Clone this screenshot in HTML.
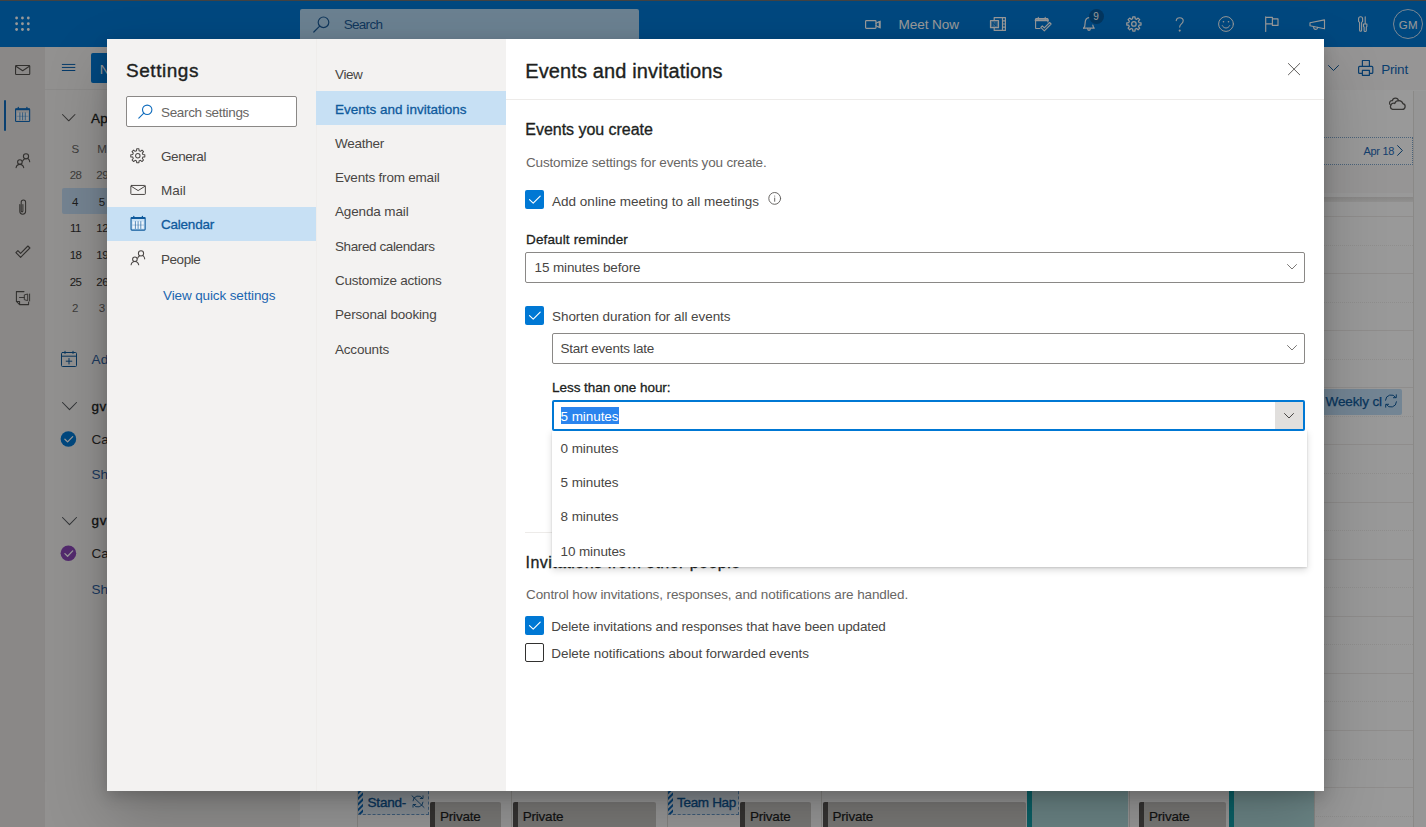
<!DOCTYPE html>
<html lang="en"><head><meta charset="utf-8"><title>Settings - Calendar - Events and invitations</title>
<style>
*{box-sizing:border-box}
html,body{margin:0;padding:0}
body{width:1426px;height:827px;overflow:hidden;position:relative;background:#fff;font-family:"Liberation Sans",sans-serif}
.t{position:absolute;white-space:nowrap;line-height:1;display:block}
.a{position:absolute}
svg{position:absolute;overflow:visible}
#bg{position:absolute;left:0;top:0;width:1426px;height:827px;overflow:hidden;background:#fff}
#ov{position:absolute;left:0;top:0;width:1426px;height:827px;background:rgba(0,0,0,.4)}
#modal{position:absolute;left:107px;top:39px;width:1217px;height:752px;background:#fff;box-shadow:0 25.600px 57.600px 0 rgba(0,0,0,.22),0 4.800px 14.400px 0 rgba(0,0,0,.18)}
.cb{position:absolute;width:19.300px;height:19.300px;border-radius:2px;background:#0078d4}
.dd{position:absolute;height:31px;border:1px solid #8a8886;border-radius:2px;background:#fff}
.hl{stroke:#edebe9;stroke-width:1}
</style></head><body>
<div id="bg">
<div class="a" style="left:0;top:0;width:1426px;height:47px;background:#0078d4"></div>
<div class="a" style="left:0;top:0;width:1426px;height:1.200px;background:#716f6d"></div>
<div class="a" style="left:300px;top:9px;width:339px;height:32px;border-radius:2px;background:rgba(255,255,255,.7)"></div>
<svg style="left:0;top:0" width="46" height="46" fill="#fff"><circle cx="16.60" cy="18.00" r="1.400"/><circle cx="16.60" cy="23.75" r="1.400"/><circle cx="16.60" cy="29.50" r="1.400"/><circle cx="22.45" cy="18.00" r="1.400"/><circle cx="22.45" cy="23.75" r="1.400"/><circle cx="22.45" cy="29.50" r="1.400"/><circle cx="28.30" cy="18.00" r="1.400"/><circle cx="28.30" cy="23.75" r="1.400"/><circle cx="28.30" cy="29.50" r="1.400"/></svg>
<svg style="left:312.5px;top:15.5px" width="17" height="17" viewBox="0 0 17 17" fill="none" stroke="#1d5d9a" stroke-width="1.2" stroke-linecap="round" stroke-linejoin="round"><circle cx="10.500" cy="6.300" r="5.300"/><path d="M6.700 10.100L.800 16"/></svg>
<svg style="left:865px;top:19.5px" width="16" height="9" viewBox="0 0 16 9" fill="none" stroke="#fff" stroke-width="1.2" stroke-linecap="round" stroke-linejoin="round"><rect x=".6" y=".6" width="10.400" height="7.800" rx=".8"/><path d="M11 3.300l3.300-1.800v6l-3.300-1.800M15.200 1v7" stroke-width="1.100"/></svg>
<svg style="left:989.5px;top:17px" width="16" height="14" viewBox="0 0 16 14" fill="none" stroke="#fff" stroke-width="1.2" stroke-linecap="round" stroke-linejoin="round"><path d="M4.200 3.300V.6h11.200v12.800H4.200v-2.500"/><rect x=".5" y="3.500" width="8" height="7.200" fill="#fff" fill-opacity=".4"/><path d="M2.800 9V5.200l3.200 3.800V5.200" stroke="#0078d4" stroke-width="1"/><path d="M12.500.6v12.800M12.500 3.800h2.900M12.500 7h2.900M12.500 10.200h2.900"/></svg>
<svg style="left:1034.5px;top:16.5px" width="17" height="15" viewBox="0 0 17 15" fill="none" stroke="#fff" stroke-width="1.1" stroke-linecap="round" stroke-linejoin="round"><path d="M5 11.500H1.200a.6.6 0 01-.6-.6V2.200a.6.6 0 01.6-.6h11.100a.6.6 0 01.6.6V5"/><path d="M.6 3.200h12.300" stroke-width="2"/><path d="M3.300.4v1.800M10.200.4v1.800"/><path d="M5.800 10.300l1.500-1.500 2 2 5.300-5.300 1.500 1.500-6.800 6.800z" stroke-width="1.100"/></svg>
<svg style="left:1083px;top:17px" width="12" height="14" viewBox="0 0 12 14" fill="none" stroke="#fff" stroke-width="1.2" stroke-linecap="round" stroke-linejoin="round"><path d="M.6 11.200c1.200-1.100 1.500-2.400 1.500-5C2.100 3 3.600.6 6.200.6"/><path d="M.6 11.200h10.600c-.8-.8-1.300-1.800-1.400-3.200"/><path d="M4.600 11.600c.1 1 .7 1.700 1.400 1.700s1.300-.7 1.400-1.700"/></svg>
<div class="a" style="left:1088.500px;top:8.800px;width:15px;height:15px;border-radius:50%;background:#065a9e"></div>
<svg style="left:1126.4px;top:16.1px" width="15.8" height="15.8" viewBox="0 0 16 16" fill="none" stroke="#fff" stroke-width="1.25" stroke-linecap="round" stroke-linejoin="round"><path d="M13.24 6.70L15.21 6.86L15.21 9.14L13.24 9.30L12.63 10.79L13.91 12.29L12.29 13.91L10.79 12.63L9.30 13.24L9.14 15.21L6.86 15.21L6.70 13.24L5.21 12.63L3.71 13.91L2.09 12.29L3.37 10.79L2.76 9.30L0.79 9.14L0.79 6.86L2.76 6.70L3.37 5.21L2.09 3.71L3.71 2.09L5.21 3.37L6.70 2.76L6.86 0.79L9.14 0.79L9.30 2.76L10.79 3.37L12.29 2.09L13.91 3.71L12.63 5.21Z"/><circle cx="8" cy="8" r="2.3"/></svg>
<svg style="left:1175px;top:16.5px" width="10" height="15" viewBox="0 0 10 15" fill="none" stroke="#fff" stroke-width="1.1" stroke-linecap="round" stroke-linejoin="round"><path d="M1.200 3.600C1.400 1.800 2.800.700 4.700.700c2 0 3.500 1.200 3.500 3.100 0 1.600-.9 2.400-2 3.300-1 .8-1.500 1.500-1.500 3.000"/><circle cx="4.700" cy="13.600" r=".5" fill="#fff"/></svg>
<svg style="left:1217.7px;top:16px" width="16" height="16" viewBox="0 0 16 16" fill="none" stroke="#fff" stroke-width="1" stroke-linecap="round" stroke-linejoin="round"><circle cx="8" cy="8" r="7.4"/><path d="M4.300 9.600c.8 1.600 2.100 2.400 3.700 2.400s2.900-.8 3.700-2.400"/><circle cx="5.500" cy="5.800" r=".8" fill="#fff" stroke="none"/><circle cx="10.500" cy="5.800" r=".8" fill="#fff" stroke="none"/></svg>
<svg style="left:0;top:0" width="1426" height="827" viewBox="0 0 1426 827" fill="none" stroke="#fff" stroke-width="1.15" stroke-linecap="round" stroke-linejoin="round"><path d="M1265.700 16.800V31.500M1265.700 17.300H1272.400V23.900H1265.700M1272.400 18.900H1278V25.400H1272.400V23.900"/></svg>
<svg style="left:0;top:0" width="1426" height="827" viewBox="0 0 1426 827" fill="none" stroke="#fff" stroke-width="1.15" stroke-linecap="round" stroke-linejoin="round"><path d="M1324.500 19.900V28.700L1310 25.700V22.700Z"/><path d="M1313.700 26.600v1.300c.2 1 1 1.500 1.900 1.500s1.700-.5 1.900-1.400v-.6"/></svg>
<svg style="left:0;top:0" width="1426" height="827" viewBox="0 0 1426 827" fill="none" stroke="#fff" stroke-width="1.1" stroke-linecap="round" stroke-linejoin="round"><path d="M1358.600 18.800a2 2 0 014 0v2.600l-1 1.100v7.800a1 1 0 01-2 0v-7.800l-1-1.100z"/><path d="M1365.200 16.800v7.200M1363.500 24h3.400v2.300l-.6.800v3.300a1.100 1.100 0 01-2.200 0v-3.300l-.6-.8z"/></svg>
<div class="a" style="left:1393px;top:9px;width:30px;height:30px;border-radius:50%;border:1px solid #cfe3f5"></div>
<div class="a" style="left:0;top:47px;width:45px;height:780px;background:#e6e3e1"></div>
<div class="a" style="left:45px;top:47px;width:255px;height:780px;background:#f3f2f1"></div>
<div class="a" style="left:45px;top:89px;width:255px;height:1px;background:#e8e6e4"></div>
<div class="a" style="left:4px;top:100px;width:2px;height:31px;background:#0f6cbd;border-radius:1px"></div>
<svg style="left:0;top:0" width="1426" height="827" viewBox="0 0 1426 827" fill="none" stroke="#53504d" stroke-width="1.1" stroke-linecap="round" stroke-linejoin="round"><rect x="15.550" y="65.550" width="14.200" height="9" rx=".7"/><path d="M15.900 66.300L22.650 70.700L29.400 66.300"/></svg>
<svg style="left:0;top:0" width="1426" height="827" viewBox="0 0 1426 827" fill="none" stroke="#0f6cbd" stroke-width="1" stroke-linecap="round" stroke-linejoin="round"><rect x="15.55" y="108.75" width="14.10" height="12.70" rx=".8" stroke-width="1.100"/><rect x="15.50" y="108.50" width="14.20" height="1.700" fill="#0f6cbd" stroke="none"/><path d="M18.30 107.50v1.200M26.90 107.50v1.200" stroke-width="1.300"/><rect x="17.20" y="112.80" width="10.80" height="7.00" fill="#f3f8fd" stroke="none"/><path d="M19.90 112.80v7.00" stroke-width=".9" stroke-opacity=".75"/><path d="M22.60 112.80v7.00" stroke-width=".9" stroke-opacity=".75"/><path d="M25.30 112.80v7.00" stroke-width=".9" stroke-opacity=".75"/><path d="M17.20 116.30h10.80" stroke-width=".6" stroke-opacity=".5"/></svg>
<svg style="left:0;top:0" width="1426" height="827" viewBox="0 0 1426 827" fill="none" stroke="#53504d" stroke-width="1.1" stroke-linecap="round" stroke-linejoin="round"><circle cx="26" cy="156.3" r="2.600"/><circle cx="19.9" cy="162.1" r="2.300"/><path d="M28.2 158.8c1 .8 1.400 1.800 1.500 3M22.6 161.2c.4-1.200 1.100-2 2-2.500M16.1 167.7c.4-2.100 1.900-3.300 3.800-3.300s3.300 1.200 3.800 3.300"/></svg>
<svg style="left:0;top:0" width="1426" height="827" viewBox="0 0 1426 827" fill="none" stroke="#53504d" stroke-width="1.05" stroke-linecap="round" stroke-linejoin="round"><path d="M19.800 204.500v6.800a2.900 2.900 0 005.800 0v-9.200a2.200 2.200 0 00-4.400 0v8.900a.85.85 0 001.700 0v-6.500"/></svg>
<svg style="left:0;top:0" width="1426" height="827" viewBox="0 0 1426 827" fill="none" stroke="#53504d" stroke-width="1.1" stroke-linecap="round" stroke-linejoin="round"><path d="M15.900 252.600l2-2 2.700 2.700 7.300-7.300 2 2-9.300 9.300z"/></svg>
<svg style="left:0;top:0" width="1426" height="827" viewBox="0 0 1426 827" fill="none" stroke="#53504d" stroke-width="1.05" stroke-linecap="round" stroke-linejoin="round"><path d="M24 291.600H16.400v9.800l3.200 3.200H28.600v-2.500M16.400 301.400h3.200v3.200"/><path d="M19.500 297.500h4.700M24.300 295.300v4.400l3.400.9v-6.200zM29.600 294v7" stroke-width=".95"/></svg>
<svg style="left:0;top:0" width="1426" height="827" viewBox="0 0 1426 827" fill="none" stroke="#0b62b0" stroke-width="1" stroke-linecap="round" stroke-linejoin="round"><path d="M62.300 64.450h12.600M62.300 67.450h12.600M62.300 70.500h12.600"/></svg>
<div class="a" style="left:91.300px;top:52.700px;width:120px;height:30.300px;background:#0078d4;border-radius:2px"></div>
<svg style="left:61.95px;top:113.55px" width="13.5" height="7.3" viewBox="0 0 13.5 7.3" fill="none" stroke="#5a5856" stroke-width="1.05" stroke-linecap="round" stroke-linejoin="round"><path d="M0.5 0.5L6.75 6.8L13.0 0.5"/></svg>
<div class="a" style="left:62px;top:187.700px;width:180px;height:26.500px;background:#c3dcf3;border-radius:2px"></div>
<svg style="left:60.5px;top:351px" width="16" height="16" viewBox="0 0 16 16" fill="none" stroke="#0f5a9c" stroke-width="1" stroke-linecap="round" stroke-linejoin="round"><rect x=".5" y="1.500" width="15" height="14" rx="1"/><path d="M.5 5.200h15M4 .3v2.200M12 .3v2.200M8 7.500v5.500M5.200 10.200h5.600"/></svg>
<svg style="left:61.900000000000006px;top:402.2px" width="15" height="8.2" viewBox="0 0 15 8.2" fill="none" stroke="#55585c" stroke-width="1.05" stroke-linecap="round" stroke-linejoin="round"><path d="M0.5 0.5L7.5 7.699999999999999L14.5 0.5"/></svg>
<svg style="left:61.900000000000006px;top:516.6px" width="15" height="8.2" viewBox="0 0 15 8.2" fill="none" stroke="#55585c" stroke-width="1.05" stroke-linecap="round" stroke-linejoin="round"><path d="M0.5 0.5L7.5 7.699999999999999L14.5 0.5"/></svg>
<svg style="left:0;top:0" width="1426" height="827" viewBox="0 0 1426 827" fill="none" stroke="#fff" stroke-width="1" stroke-linecap="round" stroke-linejoin="round"><circle cx="68.400" cy="439" r="7.800" fill="#0078d4" stroke="none"/><path d="M64.900 439.3l2.700 2.600 5.100-5.300" stroke-width="1.300"/></svg>
<svg style="left:0;top:0" width="1426" height="827" viewBox="0 0 1426 827" fill="none" stroke="#fff" stroke-width="1" stroke-linecap="round" stroke-linejoin="round"><circle cx="68.400" cy="553.3" r="7.800" fill="#8a46b8" stroke="none"/><path d="M64.900 553.6l2.700 2.600 5.100-5.300" stroke-width="1.300"/></svg>
<div class="a" style="left:300px;top:47px;width:1126px;height:43px;background:#faf9f8"></div>
<div class="a" style="left:300px;top:90.500px;width:1113px;height:737px;background:#fff"></div>
<div class="a" style="left:1413px;top:90.500px;width:13px;height:737px;background:#fbfbfb;border-left:1px solid #e6e4e2"></div>
<svg style="left:1327.5px;top:65.0px" width="11" height="6" viewBox="0 0 11 6" fill="none" stroke="#0f5a9c" stroke-width="1" stroke-linecap="round" stroke-linejoin="round"><path d="M0.5 0.5L5.5 5.5L10.5 0.5"/></svg>
<svg style="left:0;top:0" width="1426" height="827" viewBox="0 0 1426 827" fill="none" stroke="#1068b8" stroke-width="1.2" stroke-linecap="round" stroke-linejoin="round"><path d="M1362.400 66.200V60.500h7v5.700"/><rect x="1358.600" y="66.400" width="14.200" height="7" rx="1"/><rect x="1362.400" y="70.300" width="7" height="5" fill="#faf9f8"/></svg>
<svg style="left:0;top:0" width="1426" height="827" viewBox="0 0 1426 827" fill="none" stroke="#5c5a58" stroke-width="1.25" stroke-linecap="round" stroke-linejoin="round"><path d="M1392.600 109.400H1402.300A2.900 2.900 0 001403 103.700A4.400 4.400 0 001394.700 103.500A3 3 0 001392.600 109.400Z"/><path d="M1390.700 105.300A2.500 2.500 0 011392.400 100.700A3.100 3.100 0 011398.500 100.600"/></svg>
<div class="a" style="left:1314px;top:136.500px;width:99px;height:28.300px;border:1px dotted #7ea6cc"></div>
<svg style="left:1396.500px;top:145px" width="6" height="11" fill="none" stroke="#0f5a9c" stroke-width="1" stroke-linecap="round" stroke-linejoin="round"><path d="M.6.600L5.400 5.500.6 10.400"/></svg>
<div class="a" style="left:1314px;top:165px;width:99px;height:28px;background:#faf9f8"></div>
<div class="a" style="left:1314px;top:196.500px;width:99px;height:5px;background:linear-gradient(#e3e1df,#f1f0ef)"></div>
<div class="a" style="left:1314px;top:216.1px;width:99px;height:0;border-top:1px solid #eeecea"></div>
<div class="a" style="left:1314px;top:244.6px;width:99px;height:0;border-top:1px dotted #efedeb"></div>
<div class="a" style="left:1314px;top:273.1px;width:99px;height:0;border-top:1px solid #eeecea"></div>
<div class="a" style="left:1314px;top:301.7px;width:99px;height:0;border-top:1px dotted #efedeb"></div>
<div class="a" style="left:1314px;top:330.2px;width:99px;height:0;border-top:1px solid #eeecea"></div>
<div class="a" style="left:1314px;top:358.8px;width:99px;height:0;border-top:1px dotted #efedeb"></div>
<div class="a" style="left:1314px;top:387.4px;width:99px;height:0;border-top:1px solid #eeecea"></div>
<div class="a" style="left:1314px;top:415.9px;width:99px;height:0;border-top:1px dotted #efedeb"></div>
<div class="a" style="left:1314px;top:444.4px;width:99px;height:0;border-top:1px solid #eeecea"></div>
<div class="a" style="left:1314px;top:473.0px;width:99px;height:0;border-top:1px dotted #efedeb"></div>
<div class="a" style="left:1314px;top:501.6px;width:99px;height:0;border-top:1px solid #eeecea"></div>
<div class="a" style="left:1314px;top:530.1px;width:99px;height:0;border-top:1px dotted #efedeb"></div>
<div class="a" style="left:1314px;top:558.7px;width:99px;height:0;border-top:1px solid #eeecea"></div>
<div class="a" style="left:1314px;top:587.2px;width:99px;height:0;border-top:1px dotted #efedeb"></div>
<div class="a" style="left:1314px;top:615.8px;width:99px;height:0;border-top:1px solid #eeecea"></div>
<div class="a" style="left:1314px;top:644.3px;width:99px;height:0;border-top:1px dotted #efedeb"></div>
<div class="a" style="left:1314px;top:672.9px;width:99px;height:0;border-top:1px solid #eeecea"></div>
<div class="a" style="left:1314px;top:701.4px;width:99px;height:0;border-top:1px dotted #efedeb"></div>
<div class="a" style="left:1314px;top:730.0px;width:99px;height:0;border-top:1px solid #eeecea"></div>
<div class="a" style="left:1314px;top:758.5px;width:99px;height:0;border-top:1px dotted #efedeb"></div>
<div class="a" style="left:1314px;top:787.1px;width:99px;height:0;border-top:1px solid #eeecea"></div>
<div class="a" style="left:1314px;top:815.6px;width:99px;height:0;border-top:1px dotted #efedeb"></div>
<div class="a" style="left:1314px;top:844.1px;width:99px;height:0;border-top:1px solid #eeecea"></div>
<div class="a" style="left:1318px;top:388.800px;width:84.200px;height:25.800px;background:#c0def7;border-radius:2px"></div>
<svg style="left:1384px;top:394px" width="14" height="14" viewBox="0 0 14 14" fill="none" stroke="#0f5a9c" stroke-width="1" stroke-linecap="round" stroke-linejoin="round"><path d="M1.500 6.200A5.600 5.600 0 0111.800 3.500M12.500 7.800A5.600 5.600 0 012.200 10.500"/><path d="M12.300.800v2.900H9.400M1.700 13.200v-2.900h2.900"/></svg>
<svg style="left:0;top:0" width="1" height="1"><defs><pattern id="ht" width="4" height="4" patternUnits="userSpaceOnUse" patternTransform="rotate(-45)"><rect width="4" height="2" fill="#0f6cbd"/></pattern></defs></svg>
<div class="a" style="left:358px;top:786px;width:70.5px;height:28.500px;background:#e6f0fa;border:1px dashed #6a9bcb;border-left:none"></div>
<svg style="left:358px;top:786px" width="5" height="28"><rect width="5" height="28" fill="url(#ht)"/></svg>
<div class="a" style="left:667.5px;top:786px;width:71.3px;height:28.500px;background:#e6f0fa;border:1px dashed #6a9bcb;border-left:none"></div>
<svg style="left:667.5px;top:786px" width="5" height="28"><rect width="5" height="28" fill="url(#ht)"/></svg>
<svg style="left:410.5px;top:794.5px" width="14" height="13" viewBox="0 0 14 13" fill="none" stroke="#0f5a9c" stroke-width="0.9" stroke-linecap="round" stroke-linejoin="round"><path d="M2 5.800A5.200 5.200 0 0111.500 3.300M12 7.200A5.200 5.200 0 012.500 9.700"/><path d="M12 .800v2.700H9.300M2 12.200V9.500h2.700"/><path d="M1 .800l12 11.600"/></svg>
<div class="a" style="left:430.3px;top:802px;width:70.7px;height:30px;background:#cecbc8;border-radius:2px"></div>
<div class="a" style="left:430.3px;top:802px;width:5px;height:30px;background:#5a5856;border-radius:2px 0 0 2px"></div>
<div class="a" style="left:513px;top:802px;width:142.5px;height:30px;background:#cecbc8;border-radius:2px"></div>
<div class="a" style="left:513px;top:802px;width:5px;height:30px;background:#5a5856;border-radius:2px 0 0 2px"></div>
<div class="a" style="left:740.3px;top:802px;width:70.7px;height:30px;background:#cecbc8;border-radius:2px"></div>
<div class="a" style="left:740.3px;top:802px;width:5px;height:30px;background:#5a5856;border-radius:2px 0 0 2px"></div>
<div class="a" style="left:822.9px;top:802px;width:203.3px;height:30px;background:#cecbc8;border-radius:2px"></div>
<div class="a" style="left:822.9px;top:802px;width:5px;height:30px;background:#5a5856;border-radius:2px 0 0 2px"></div>
<div class="a" style="left:1139.3px;top:802px;width:86.7px;height:30px;background:#cecbc8;border-radius:2px"></div>
<div class="a" style="left:1139.3px;top:802px;width:5px;height:30px;background:#5a5856;border-radius:2px 0 0 2px"></div>
<div class="a" style="left:1027px;top:760px;width:100.5px;height:70px;background:#b5dfe2"></div>
<div class="a" style="left:1027px;top:760px;width:5px;height:70px;background:#13a3ad"></div>
<div class="a" style="left:1228.5px;top:760px;width:85px;height:70px;background:#b5dfe2"></div>
<div class="a" style="left:1228.5px;top:760px;width:5px;height:70px;background:#13a3ad"></div>
<div class="a" style="left:357px;top:760px;width:1px;height:70px;background:#e1dfdd"></div>
<div class="a" style="left:511px;top:760px;width:1px;height:70px;background:#e1dfdd"></div>
<div class="a" style="left:667.3px;top:760px;width:1px;height:70px;background:#e1dfdd"></div>
<div class="a" style="left:821px;top:760px;width:1px;height:70px;background:#e1dfdd"></div>
<div class="a" style="left:1129px;top:760px;width:1px;height:70px;background:#e1dfdd"></div>
<div class="a" style="left:1314px;top:760px;width:1px;height:70px;background:#e1dfdd"></div>
<span class="t" style="font-size:13.5px;color:#1d5d9a;left:343.70px;top:18.00px;letter-spacing:-0.697px;">Search</span>
<span class="t" style="font-size:13.5px;color:#ffffff;left:898.60px;top:18.00px;letter-spacing:-0.048px;">Meet Now</span>
<span class="t" style="font-size:10px;color:#ffffff;left:1093.30px;top:12.00px;letter-spacing:0.037px;">9</span>
<span class="t" style="font-size:11.5px;color:#ffffff;left:1398.70px;top:20.00px;letter-spacing:0.384px;">GM</span>
<span class="t" style="font-size:13.5px;color:#1068b8;left:1381.20px;top:63.00px;letter-spacing:-0.193px;">Print</span>
<span class="t" style="font-size:11px;color:#1f6ab8;left:1363.60px;top:146.00px;letter-spacing:-0.337px;">Apr 18</span>
<span class="t" style="font-size:13.5px;color:#0f5a9c;-webkit-text-stroke:0.25px #0f5a9c;left:1325.60px;top:395.00px;letter-spacing:-0.124px;">Weekly cl</span>
<span class="t" style="font-size:13.5px;color:#ffffff;left:99.80px;top:63.00px;letter-spacing:0.245px;">New event</span>
<span class="t" style="font-size:13.5px;color:#201f1e;-webkit-text-stroke:0.3px #201f1e;left:91.00px;top:112.00px;letter-spacing:0.320px;">April 2021</span>
<span class="t" style="font-size:11.5px;color:#686664;left:45.30px;width:60px;text-align:center;top:144.00px;">S</span>
<span class="t" style="font-size:11.5px;color:#686664;left:72.00px;width:60px;text-align:center;top:144.00px;">M</span>
<span class="t" style="font-size:11.5px;color:#686664;left:98.70px;width:60px;text-align:center;top:144.00px;">T</span>
<span class="t" style="font-size:11.5px;color:#686664;left:125.40px;width:60px;text-align:center;top:144.00px;">W</span>
<span class="t" style="font-size:11.5px;color:#686664;left:152.10px;width:60px;text-align:center;top:144.00px;">T</span>
<span class="t" style="font-size:11.5px;color:#686664;left:178.80px;width:60px;text-align:center;top:144.00px;">F</span>
<span class="t" style="font-size:11.5px;color:#686664;left:205.50px;width:60px;text-align:center;top:144.00px;">S</span>
<span class="t" style="font-size:11.5px;color:#686664;left:45.30px;width:60px;text-align:center;top:170.00px;letter-spacing:-0.5px;text-indent:0.5px;">28</span>
<span class="t" style="font-size:11.5px;color:#686664;left:72.00px;width:60px;text-align:center;top:170.00px;letter-spacing:-0.5px;text-indent:0.5px;">29</span>
<span class="t" style="font-size:11.5px;color:#686664;left:98.70px;width:60px;text-align:center;top:170.00px;letter-spacing:-0.5px;text-indent:0.5px;">30</span>
<span class="t" style="font-size:11.5px;color:#686664;left:125.40px;width:60px;text-align:center;top:170.00px;letter-spacing:-0.5px;text-indent:0.5px;">31</span>
<span class="t" style="font-size:11.5px;color:#323130;left:152.10px;width:60px;text-align:center;top:170.00px;">1</span>
<span class="t" style="font-size:11.5px;color:#323130;left:178.80px;width:60px;text-align:center;top:170.00px;">2</span>
<span class="t" style="font-size:11.5px;color:#323130;left:205.50px;width:60px;text-align:center;top:170.00px;">3</span>
<span class="t" style="font-size:11.5px;color:#323130;left:45.30px;width:60px;text-align:center;top:197.00px;">4</span>
<span class="t" style="font-size:11.5px;color:#323130;left:72.00px;width:60px;text-align:center;top:197.00px;">5</span>
<span class="t" style="font-size:11.5px;color:#323130;left:98.70px;width:60px;text-align:center;top:197.00px;">6</span>
<span class="t" style="font-size:11.5px;color:#323130;left:125.40px;width:60px;text-align:center;top:197.00px;">7</span>
<span class="t" style="font-size:11.5px;color:#323130;left:152.10px;width:60px;text-align:center;top:197.00px;">8</span>
<span class="t" style="font-size:11.5px;color:#323130;left:178.80px;width:60px;text-align:center;top:197.00px;">9</span>
<span class="t" style="font-size:11.5px;color:#323130;left:205.50px;width:60px;text-align:center;top:197.00px;letter-spacing:-0.5px;text-indent:0.5px;">10</span>
<span class="t" style="font-size:11.5px;color:#323130;left:45.30px;width:60px;text-align:center;top:223.00px;letter-spacing:-0.5px;text-indent:0.5px;">11</span>
<span class="t" style="font-size:11.5px;color:#323130;left:72.00px;width:60px;text-align:center;top:223.00px;letter-spacing:-0.5px;text-indent:0.5px;">12</span>
<span class="t" style="font-size:11.5px;color:#323130;left:98.70px;width:60px;text-align:center;top:223.00px;letter-spacing:-0.5px;text-indent:0.5px;">13</span>
<span class="t" style="font-size:11.5px;color:#323130;left:125.40px;width:60px;text-align:center;top:223.00px;letter-spacing:-0.5px;text-indent:0.5px;">14</span>
<span class="t" style="font-size:11.5px;color:#323130;left:152.10px;width:60px;text-align:center;top:223.00px;letter-spacing:-0.5px;text-indent:0.5px;">15</span>
<span class="t" style="font-size:11.5px;color:#323130;left:178.80px;width:60px;text-align:center;top:223.00px;letter-spacing:-0.5px;text-indent:0.5px;">16</span>
<span class="t" style="font-size:11.5px;color:#323130;left:205.50px;width:60px;text-align:center;top:223.00px;letter-spacing:-0.5px;text-indent:0.5px;">17</span>
<span class="t" style="font-size:11.5px;color:#323130;left:45.30px;width:60px;text-align:center;top:250.00px;letter-spacing:-0.5px;text-indent:0.5px;">18</span>
<span class="t" style="font-size:11.5px;color:#323130;left:72.00px;width:60px;text-align:center;top:250.00px;letter-spacing:-0.5px;text-indent:0.5px;">19</span>
<span class="t" style="font-size:11.5px;color:#323130;left:98.70px;width:60px;text-align:center;top:250.00px;letter-spacing:-0.5px;text-indent:0.5px;">20</span>
<span class="t" style="font-size:11.5px;color:#323130;left:125.40px;width:60px;text-align:center;top:250.00px;letter-spacing:-0.5px;text-indent:0.5px;">21</span>
<span class="t" style="font-size:11.5px;color:#323130;left:152.10px;width:60px;text-align:center;top:250.00px;letter-spacing:-0.5px;text-indent:0.5px;">22</span>
<span class="t" style="font-size:11.5px;color:#323130;left:178.80px;width:60px;text-align:center;top:250.00px;letter-spacing:-0.5px;text-indent:0.5px;">23</span>
<span class="t" style="font-size:11.5px;color:#323130;left:205.50px;width:60px;text-align:center;top:250.00px;letter-spacing:-0.5px;text-indent:0.5px;">24</span>
<span class="t" style="font-size:11.5px;color:#323130;left:45.30px;width:60px;text-align:center;top:277.00px;letter-spacing:-0.5px;text-indent:0.5px;">25</span>
<span class="t" style="font-size:11.5px;color:#323130;left:72.00px;width:60px;text-align:center;top:277.00px;letter-spacing:-0.5px;text-indent:0.5px;">26</span>
<span class="t" style="font-size:11.5px;color:#323130;left:98.70px;width:60px;text-align:center;top:277.00px;letter-spacing:-0.5px;text-indent:0.5px;">27</span>
<span class="t" style="font-size:11.5px;color:#323130;left:125.40px;width:60px;text-align:center;top:277.00px;letter-spacing:-0.5px;text-indent:0.5px;">28</span>
<span class="t" style="font-size:11.5px;color:#323130;left:152.10px;width:60px;text-align:center;top:277.00px;letter-spacing:-0.5px;text-indent:0.5px;">29</span>
<span class="t" style="font-size:11.5px;color:#323130;left:178.80px;width:60px;text-align:center;top:277.00px;letter-spacing:-0.5px;text-indent:0.5px;">30</span>
<span class="t" style="font-size:11.5px;color:#686664;left:205.50px;width:60px;text-align:center;top:277.00px;">1</span>
<span class="t" style="font-size:11.5px;color:#686664;left:45.30px;width:60px;text-align:center;top:303.00px;">2</span>
<span class="t" style="font-size:11.5px;color:#686664;left:72.00px;width:60px;text-align:center;top:303.00px;">3</span>
<span class="t" style="font-size:11.5px;color:#686664;left:98.70px;width:60px;text-align:center;top:303.00px;">4</span>
<span class="t" style="font-size:11.5px;color:#686664;left:125.40px;width:60px;text-align:center;top:303.00px;">5</span>
<span class="t" style="font-size:11.5px;color:#686664;left:152.10px;width:60px;text-align:center;top:303.00px;">6</span>
<span class="t" style="font-size:11.5px;color:#686664;left:178.80px;width:60px;text-align:center;top:303.00px;">7</span>
<span class="t" style="font-size:11.5px;color:#686664;left:205.50px;width:60px;text-align:center;top:303.00px;">8</span>
<span class="t" style="font-size:13.5px;color:#2f5f9e;left:91.60px;top:353.00px;letter-spacing:0.036px;">Add calendar</span>
<span class="t" style="font-size:13.5px;color:#201f1e;-webkit-text-stroke:0.3px #201f1e;left:91.60px;top:400.00px;letter-spacing:0.457px;">gvance@contoso.com</span>
<span class="t" style="font-size:13.5px;color:#323130;left:91.60px;top:433.00px;letter-spacing:-0.100px;">Calendar</span>
<span class="t" style="font-size:13.5px;color:#2f5f9e;left:91.60px;top:468.00px;letter-spacing:-0.129px;">Show all</span>
<span class="t" style="font-size:13.5px;color:#201f1e;-webkit-text-stroke:0.3px #201f1e;left:91.60px;top:514.00px;letter-spacing:0.665px;">gvance@outlook.com</span>
<span class="t" style="font-size:13.5px;color:#323130;left:91.60px;top:547.00px;letter-spacing:-0.100px;">Calendar</span>
<span class="t" style="font-size:13.5px;color:#2f5f9e;left:91.60px;top:583.00px;letter-spacing:-0.129px;">Show all</span>
<span class="t" style="font-size:13.5px;color:#0f5a9c;-webkit-text-stroke:0.35px #0f5a9c;left:367.60px;top:796.00px;letter-spacing:-0.230px;">Stand-</span>
<span class="t" style="font-size:13.5px;color:#0f5a9c;-webkit-text-stroke:0.35px #0f5a9c;left:677.00px;top:796.00px;letter-spacing:-0.316px;">Team Hap</span>
<span class="t" style="font-size:13.5px;color:#201f1e;-webkit-text-stroke:0.2px #201f1e;left:440.00px;top:810.00px;letter-spacing:-0.204px;">Private</span>
<span class="t" style="font-size:13.5px;color:#201f1e;-webkit-text-stroke:0.2px #201f1e;left:522.70px;top:810.00px;letter-spacing:-0.204px;">Private</span>
<span class="t" style="font-size:13.5px;color:#201f1e;-webkit-text-stroke:0.2px #201f1e;left:749.90px;top:810.00px;letter-spacing:-0.204px;">Private</span>
<span class="t" style="font-size:13.5px;color:#201f1e;-webkit-text-stroke:0.2px #201f1e;left:832.50px;top:810.00px;letter-spacing:-0.204px;">Private</span>
<span class="t" style="font-size:13.5px;color:#201f1e;-webkit-text-stroke:0.2px #201f1e;left:1149.00px;top:810.00px;letter-spacing:-0.204px;">Private</span>
</div>
<div id="ov"></div>
<div id="modal">
<div class="a" style="left:0;top:0;width:209px;height:752px;background:#f3f2f1"></div>
<div class="a" style="left:209px;top:0;width:190px;height:752px;background:#f3f2f1;border-left:1px solid #efedeb"></div>
<div class="a" style="left:-107px;top:-39px;width:0;height:0">
<div class="a" style="left:126px;top:96px;width:170.500px;height:30.500px;border:1px solid #8a8886;border-radius:2px;background:#fff"></div>
<svg style="left:138px;top:103.5px" width="15" height="15" viewBox="0 0 15 15" fill="none" stroke="#0f6cbd" stroke-width="1.1" stroke-linecap="round" stroke-linejoin="round"><circle cx="9.200" cy="5.800" r="4.700"/><path d="M5.800 9.200L.800 14.200"/></svg>
<div class="a" style="left:107px;top:206.800px;width:208.500px;height:34px;background:#c7e0f4"></div>
<div class="a" style="left:316px;top:90.500px;width:190px;height:34px;background:#c7e0f4"></div>
<svg style="left:130.2px;top:148.1px" width="15.6" height="15.6" viewBox="0 0 16 16" fill="none" stroke="#4a4745" stroke-width="1.05" stroke-linecap="round" stroke-linejoin="round"><path d="M13.24 6.70L15.21 6.86L15.21 9.14L13.24 9.30L12.63 10.79L13.91 12.29L12.29 13.91L10.79 12.63L9.30 13.24L9.14 15.21L6.86 15.21L6.70 13.24L5.21 12.63L3.71 13.91L2.09 12.29L3.37 10.79L2.76 9.30L0.79 9.14L0.79 6.86L2.76 6.70L3.37 5.21L2.09 3.71L3.71 2.09L5.21 3.37L6.70 2.76L6.86 0.79L9.14 0.79L9.30 2.76L10.79 3.37L12.29 2.09L13.91 3.71L12.63 5.21Z"/><circle cx="8" cy="8" r="2.3"/></svg>
<svg style="left:0;top:0" width="1426" height="827" viewBox="0 0 1426 827" fill="none" stroke="#4a4745" stroke-width="1" stroke-linecap="round" stroke-linejoin="round"><rect x="130.850" y="185.450" width="14.500" height="9" rx=".7"/><path d="M131.200 186.200L138.100 190.600L145 186.200"/></svg>
<svg style="left:0;top:0" width="1426" height="827" viewBox="0 0 1426 827" fill="none" stroke="#0f5a9c" stroke-width="1" stroke-linecap="round" stroke-linejoin="round"><rect x="131.05" y="217.55" width="14.10" height="12.60" rx=".8" stroke-width="1.100"/><rect x="131.00" y="217.30" width="14.20" height="1.700" fill="#0f5a9c" stroke="none"/><path d="M133.80 216.30v1.200M142.40 216.30v1.200" stroke-width="1.300"/><rect x="132.70" y="221.60" width="10.80" height="6.90" fill="#eef5fc" stroke="none"/><path d="M135.40 221.60v6.90" stroke-width=".9" stroke-opacity=".75"/><path d="M138.10 221.60v6.90" stroke-width=".9" stroke-opacity=".75"/><path d="M140.80 221.60v6.90" stroke-width=".9" stroke-opacity=".75"/><path d="M132.70 225.05h10.80" stroke-width=".6" stroke-opacity=".5"/></svg>
<svg style="left:0;top:0" width="1426" height="827" viewBox="0 0 1426 827" fill="none" stroke="#4a4745" stroke-width="1.05" stroke-linecap="round" stroke-linejoin="round"><circle cx="141" cy="253.4" r="2.600"/><circle cx="134.9" cy="259.2" r="2.300"/><path d="M143.2 255.9c1 .8 1.400 1.800 1.500 3M137.6 258.3c.4-1.200 1.100-2 2-2.500M131.1 264.8c.4-2.100 1.900-3.300 3.800-3.300s3.300 1.200 3.800 3.300"/></svg>
<div class="a" style="left:506px;top:99px;width:818px;height:1px;background:#edebe9"></div>
<svg style="left:0;top:0" width="1426" height="827" viewBox="0 0 1426 827" fill="none" stroke="#605e5c" stroke-width="1" stroke-linecap="round" stroke-linejoin="round"><path d="M1288.400 63.500l11.300 11.300M1299.700 63.500l-11.300 11.300"/></svg>
<div class="cb" style="left:525px;top:190px"><svg width="20" height="20" viewBox="0 0 20 20" style="left:0;top:0"><path d="M4.500 9.700l3.700 3.500 7-7" stroke="#fff" stroke-width="1.15" fill="none" stroke-linecap="round" stroke-linejoin="round"/></svg></div>
<div class="cb" style="left:525px;top:306px"><svg width="20" height="20" viewBox="0 0 20 20" style="left:0;top:0"><path d="M4.500 9.700l3.700 3.500 7-7" stroke="#fff" stroke-width="1.15" fill="none" stroke-linecap="round" stroke-linejoin="round"/></svg></div>
<div class="cb" style="left:525px;top:616px"><svg width="20" height="20" viewBox="0 0 20 20" style="left:0;top:0"><path d="M4.500 9.700l3.700 3.500 7-7" stroke="#fff" stroke-width="1.15" fill="none" stroke-linecap="round" stroke-linejoin="round"/></svg></div>
<div class="cb" style="left:525px;top:642.5px;background:#fff;border:1px solid #323130"></div>
<svg style="left:0;top:0" width="1426" height="827" viewBox="0 0 1426 827" fill="none" stroke="#605e5c" stroke-width="0.95" stroke-linecap="round" stroke-linejoin="round"><circle cx="774.700" cy="198.400" r="5.900"/><path d="M774.700 198v3.300"/><circle cx="774.700" cy="196" r=".55" fill="#605e5c" stroke="none"/></svg>
<div class="dd" style="left:525px;top:252px;width:779.700px"></div>
<svg style="left:1286.5px;top:263.75px" width="10" height="5.5" viewBox="0 0 10 5.5" fill="none" stroke="#7a7876" stroke-width="1" stroke-linecap="round" stroke-linejoin="round"><path d="M0.5 0.5L5.0 5.0L9.5 0.5"/></svg>
<div class="dd" style="left:552px;top:333px;width:752.700px"></div>
<svg style="left:1286.5px;top:344.75px" width="10" height="5.5" viewBox="0 0 10 5.5" fill="none" stroke="#7a7876" stroke-width="1" stroke-linecap="round" stroke-linejoin="round"><path d="M0.5 0.5L5.0 5.0L9.5 0.5"/></svg>
<div class="a" style="left:525px;top:532px;width:780px;height:1px;background:#edebe9"></div>
<span class="t" style="font-size:16px;color:#201f1e;-webkit-text-stroke:0.32px #201f1e;left:525.50px;top:555.00px;letter-spacing:0.452px;">Invitations from other people</span>
<div class="a" style="left:552px;top:430px;width:755px;height:137px;background:#fff;box-shadow:0 3.200px 7.200px rgba(0,0,0,.15),0 .6px 1.800px rgba(0,0,0,.13)"></div>
<div class="a" style="left:552px;top:400px;width:752.700px;height:30.500px;border:2px solid #0078d4;border-radius:2px;background:#fff"></div>
<div class="a" style="left:1274.500px;top:402px;width:28.200px;height:26.500px;background:#e1dfdd"></div>
<svg style="left:1284.0px;top:412.75px" width="10" height="5.5" viewBox="0 0 10 5.5" fill="none" stroke="#484644" stroke-width="1" stroke-linecap="round" stroke-linejoin="round"><path d="M0.5 0.5L5.0 5.0L9.5 0.5"/></svg>
<div class="a" style="left:560.500px;top:407px;width:58.300px;height:16.700px;background:#2a84ee"></div>
<span class="t" style="font-size:19px;color:#201f1e;-webkit-text-stroke:0.38px #201f1e;left:126.00px;top:61.00px;letter-spacing:0.543px;">Settings</span>
<span class="t" style="font-size:13.5px;color:#686664;left:161.00px;top:106.00px;letter-spacing:-0.338px;">Search settings</span>
<span class="t" style="font-size:13.5px;color:#484644;left:161.00px;top:150.00px;letter-spacing:-0.433px;">General</span>
<span class="t" style="font-size:13.5px;color:#484644;left:161.00px;top:184.00px;letter-spacing:-0.041px;">Mail</span>
<span class="t" style="font-size:13.5px;color:#0f5a9c;-webkit-text-stroke:0.3px #0f5a9c;left:161.00px;top:218.00px;letter-spacing:-0.225px;">Calendar</span>
<span class="t" style="font-size:13.5px;color:#484644;left:161.00px;top:253.00px;letter-spacing:-0.458px;">People</span>
<span class="t" style="font-size:13.5px;color:#1a66b0;left:163.00px;top:289.00px;letter-spacing:-0.119px;">View quick settings</span>
<span class="t" style="font-size:13.5px;color:#484644;left:335.00px;top:68.00px;letter-spacing:-0.383px;">View</span>
<span class="t" style="font-size:13.5px;color:#0f5a9c;-webkit-text-stroke:0.3px #0f5a9c;left:335.00px;top:103.00px;letter-spacing:0.007px;">Events and invitations</span>
<span class="t" style="font-size:13.5px;color:#484644;left:335.00px;top:137.00px;letter-spacing:-0.254px;">Weather</span>
<span class="t" style="font-size:13.5px;color:#484644;left:335.00px;top:171.00px;letter-spacing:-0.209px;">Events from email</span>
<span class="t" style="font-size:13.5px;color:#484644;left:335.00px;top:205.00px;letter-spacing:-0.142px;">Agenda mail</span>
<span class="t" style="font-size:13.5px;color:#484644;left:335.00px;top:240.00px;letter-spacing:-0.396px;">Shared calendars</span>
<span class="t" style="font-size:13.5px;color:#484644;left:335.00px;top:274.00px;letter-spacing:-0.223px;">Customize actions</span>
<span class="t" style="font-size:13.5px;color:#484644;left:335.00px;top:308.00px;letter-spacing:-0.177px;">Personal booking</span>
<span class="t" style="font-size:13.5px;color:#484644;left:335.00px;top:343.00px;letter-spacing:-0.191px;">Accounts</span>
<span class="t" style="font-size:20px;color:#201f1e;-webkit-text-stroke:0.36px #201f1e;left:525.20px;top:61.00px;letter-spacing:0.134px;">Events and invitations</span>
<span class="t" style="font-size:16px;color:#201f1e;-webkit-text-stroke:0.32px #201f1e;left:525.30px;top:122.00px;letter-spacing:-0.034px;">Events you create</span>
<span class="t" style="font-size:13.5px;color:#686664;left:526.00px;top:156.00px;letter-spacing:-0.174px;">Customize settings for events you create.</span>
<span class="t" style="font-size:13.5px;color:#484644;left:552.00px;top:195.00px;letter-spacing:0.018px;">Add online meeting to all meetings</span>
<span class="t" style="font-size:13.5px;color:#201f1e;-webkit-text-stroke:0.3px #201f1e;left:526.00px;top:233.00px;letter-spacing:0.138px;">Default reminder</span>
<span class="t" style="font-size:13.5px;color:#484644;left:534.50px;top:261.00px;letter-spacing:-0.122px;">15 minutes before</span>
<span class="t" style="font-size:13.5px;color:#484644;left:552.00px;top:310.00px;letter-spacing:-0.052px;">Shorten duration for all events</span>
<span class="t" style="font-size:13.5px;color:#484644;left:560.50px;top:342.00px;letter-spacing:-0.239px;">Start events late</span>
<span class="t" style="font-size:13.5px;color:#201f1e;-webkit-text-stroke:0.3px #201f1e;left:552.00px;top:381.00px;letter-spacing:-0.044px;">Less than one hour:</span>
<span class="t" style="font-size:13.5px;color:#ffffff;left:560.50px;top:410.00px;letter-spacing:-0.059px;">5 minutes</span>
<span class="t" style="font-size:13.5px;color:#484644;left:560.50px;top:442.00px;letter-spacing:-0.059px;">0 minutes</span>
<span class="t" style="font-size:13.5px;color:#484644;left:560.50px;top:476.00px;letter-spacing:-0.059px;">5 minutes</span>
<span class="t" style="font-size:13.5px;color:#484644;left:560.50px;top:510.00px;letter-spacing:-0.059px;">8 minutes</span>
<span class="t" style="font-size:13.5px;color:#484644;left:560.50px;top:545.00px;letter-spacing:-0.105px;">10 minutes</span>
<span class="t" style="font-size:13.5px;color:#686664;left:526.00px;top:588.00px;letter-spacing:-0.113px;">Control how invitations, responses, and notifications are handled.</span>
<span class="t" style="font-size:13.5px;color:#484644;left:551.20px;top:620.00px;letter-spacing:-0.112px;">Delete invitations and responses that have been updated</span>
<span class="t" style="font-size:13.5px;color:#484644;left:551.20px;top:647.00px;letter-spacing:-0.026px;">Delete notifications about forwarded events</span>
</div>
</div>
</body></html>
